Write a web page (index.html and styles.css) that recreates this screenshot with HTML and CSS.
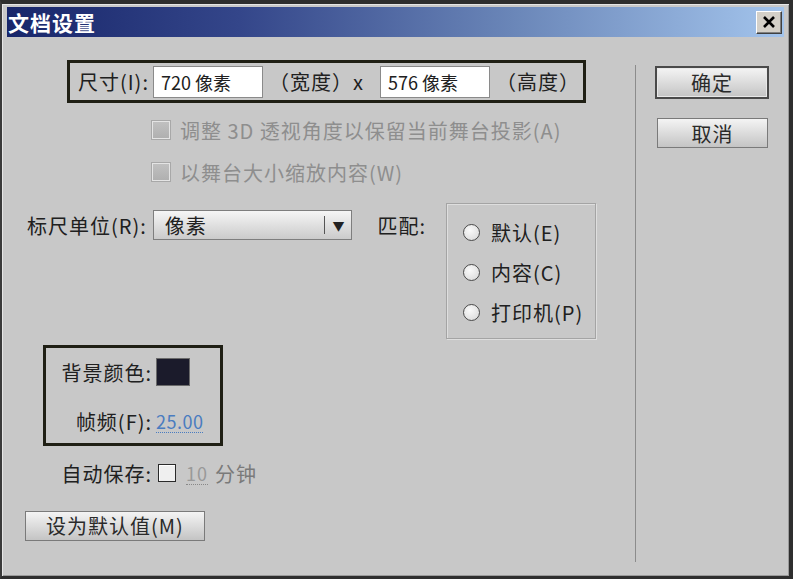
FILE: index.html
```html
<!DOCTYPE html>
<html lang="zh-CN">
<head>
    <meta charset="UTF-8">
    <title>文档设置</title>
    <link rel="stylesheet" href="styles.css">
</head>
<body>
    <div class="window">
        <div class="titlebar">
            <span class="title">文档设置</span>
            <button class="close-btn">
                <svg width="14" height="12" viewBox="0 0 14 12"><path d="M2 1 L12 11 M12 1 L2 11" stroke="#000" stroke-width="2.6" fill="none"/></svg>
            </button>
        </div>

        <div class="dialog-body">
            <div class="main">
                <!-- stage size -->
                <div class="size-box highlight">
                    <span class="label size-label">尺寸(I):</span>
                    <div class="text-field">720 像素</div>
                    <span class="unit">（宽度）x</span>
                    <div class="text-field">576 像素</div>
                    <span class="unit unit-last">（高度）</span>
                </div>

                <div class="check-row disabled first">
                    <span class="checkbox"></span>
                    <span>调整 3D 透视角度以保留当前舞台投影(A)</span>
                </div>
                <div class="check-row disabled">
                    <span class="checkbox"></span>
                    <span>以舞台大小缩放内容(W)</span>
                </div>

                <div class="ruler-row">
                    <div class="ruler">
                        <span class="label ruler-label">标尺单位(R):</span>
                        <div class="dropdown">
                            <span class="dropdown-value">像素</span>
                            <span class="dropdown-sep"></span>
                            <span class="dropdown-arrow">▼</span>
                        </div>
                        <span class="label match-label">匹配:</span>
                    </div>
                    <div class="radio-group">
                        <div class="radio-row"><span class="radio"></span>默认(E)</div>
                        <div class="radio-row"><span class="radio"></span>内容(C)</div>
                        <div class="radio-row"><span class="radio"></span>打印机(P)</div>
                    </div>
                </div>

                <div class="stage-box highlight">
                    <span class="label">背景颜色:</span>
                    <span class="swatch"></span>
                    <span class="label">帧频(F):</span>
                    <span class="link-value">25.00</span>
                </div>

                <div class="autosave-row">
                    <span class="label autosave-label">自动保存:</span>
                    <span class="checkbox enabled"></span>
                    <span class="minutes">10</span>
                    <span class="muted">分钟</span>
                </div>

                <button class="btn btn-wide">设为默认值(M)</button>
            </div>

            <div class="side">
                <button class="btn btn-default">确定</button>
                <button class="btn btn-cancel">取消</button>
            </div>
        </div>
    </div>
</body>
</html>
```

FILE: styles.css
```css
html, body {
    margin: 0;
    padding: 0;
}
body {
    width: 793px;
    height: 579px;
    overflow: hidden;
    font-family: "Noto Sans CJK SC", "Noto Sans", sans-serif;
    font-size: 20px;
    letter-spacing: 1px;
    color: #202020;
    background: #c8c8c8;
}
.window {
    box-sizing: border-box;
    width: 793px;
    height: 579px;
    display: flex;
    flex-direction: column;
    background: #c8c8c8;
    border-top: 4px solid #2e2e2e;
    border-left: 2px solid #3a3a3a;
    border-right: 4px solid #2e2e2e;
    border-bottom: 3px solid #2e2e2e;
    padding: 3px 5px 0 5px;
    box-shadow: inset 1px 1px 0 #e6e6e6, inset -1px -1px 0 #9a9a9a;
}
.titlebar {
    height: 30px;
    display: flex;
    align-items: center;
    justify-content: space-between;
    background: linear-gradient(to right, #18266a 0%, #34468a 30%, #6a86b8 65%, #a3c4ec 100%);
    padding: 0 2px 0 1px;
}
.title {
    color: #fff;
    font-weight: bold;
    font-size: 21px;
    letter-spacing: 1px;
    line-height: 30px;
}
.close-btn {
    width: 26px;
    height: 23px;
    padding: 0;
    display: flex;
    align-items: center;
    justify-content: center;
    background: #d4d0c8;
    border: 1px solid;
    border-color: #fff #404040 #404040 #fff;
    box-shadow: inset -1px -1px 0 #808080;
}

.dialog-body {
    flex: 1;
    display: flex;
}
.main {
    flex: 1;
    display: flex;
    flex-direction: column;
    align-items: flex-start;
}
.side {
    width: 129px;
    margin: 28px 0 14px;
    padding-left: 19px;
    border-left: 1px solid #8c8c8c;
    display: flex;
    flex-direction: column;
    align-items: flex-start;
}

.highlight {
    border: 3px solid #1f1f14;
}
.label {
    white-space: nowrap;
}

/* size row */
.size-box {
    margin: 23px 0 0 60px;
    width: 505px;
    height: 37px;
    display: flex;
    align-items: center;
    padding-left: 8px;
}
.size-label {
    flex: none;
    width: 75px;
}
.text-field {
    flex: none;
    box-sizing: border-box;
    width: 110px;
    height: 32px;
    padding-left: 7px;
    background: #fff;
    border: 1px solid #8a8a8a;
    font-size: 18px;
    letter-spacing: 0;
    line-height: 30px;
}
.unit {
    flex: none;
    box-sizing: border-box;
    width: 117px;
    padding-left: 6px;
    white-space: nowrap;
}
.unit-last {
    flex: 1;
    width: auto;
}

/* disabled checkboxes */
.check-row {
    display: flex;
    align-items: center;
    height: 28px;
    margin: 14px 0 0 145px;
    gap: 10px;
}
.check-row.first {
    margin-top: 13px;
}
.check-row.disabled {
    color: #8e8e8e;
}
.checkbox {
    box-sizing: border-box;
    width: 18px;
    height: 18px;
    background: linear-gradient(#c0c0c0, #b0b0b0);
    border: 1px solid #e4e4e4;
    box-shadow: 0 0 0 1px #a8a8a8;
}
.checkbox.enabled {
    background: #efefef;
    border: 1px solid #2a2a2a;
    box-shadow: inset 1px 1px 0 #fff;
}

/* ruler units */
.ruler-row {
    display: flex;
    margin: 17px 0 0 20px;
}
.ruler {
    width: 399px;
    display: flex;
    align-items: center;
    height: 30px;
    margin-top: 7px;
}
.ruler-label {
    width: 126px;
}
.dropdown {
    box-sizing: border-box;
    width: 200px;
    height: 30px;
    display: flex;
    align-items: center;
    border: 1px solid #7e7e7e;
    background: linear-gradient(#f6f6f6, #dedede 55%, #cbcbcb);
    padding-left: 11px;
}
.dropdown-value {
    flex: 1;
}
.dropdown-sep {
    width: 1px;
    height: 18px;
    background: #555;
}
.dropdown-arrow {
    width: 26px;
    text-align: center;
    font-size: 12px;
    letter-spacing: 0;
    color: #222;
}
.match-label {
    margin-left: 25px;
}
.radio-group {
    box-sizing: border-box;
    width: 150px;
    height: 136px;
    margin-left: 20px;
    padding: 8px 0 0 16px;
    border: 1px solid #a4a4a4;
    box-shadow: inset 1px 1px 0 #dedede, 1px 1px 0 #dedede;
}
.radio-row {
    display: flex;
    align-items: center;
    height: 40px;
    gap: 11px;
}
.radio {
    box-sizing: border-box;
    width: 17px;
    height: 17px;
    border-radius: 50%;
    border: 1px solid #4a4a4a;
    background: radial-gradient(circle at 40% 35%, #fafafa, #d6d6d6);
}

/* background & frame rate */
.stage-box {
    margin: 6px 0 0 36px;
    width: 174px;
    height: 85px;
    display: grid;
    grid-template-columns: 106px auto;
    grid-template-rows: 28px 28px;
    row-gap: 21px;
    column-gap: 4px;
    align-items: center;
    align-content: start;
    padding-top: 10px;
}
.stage-box .label {
    text-align: right;
}
.swatch {
    box-sizing: border-box;
    width: 34px;
    height: 28px;
    background: #1b1b2b;
    border: 1px solid #6a6a6a;
}
.link-value {
    color: #4a7cc0;
    border-bottom: 1px dotted #4a7cc0;
    line-height: 22px;
    font-size: 18px;
    letter-spacing: 0.5px;
    justify-self: start;
}

/* autosave */
.autosave-row {
    display: flex;
    align-items: center;
    height: 28px;
    margin-top: 13px;
}
.autosave-label {
    width: 145px;
    text-align: right;
    margin-right: 6px;
}
.minutes {
    margin-left: 10px;
    color: #999;
    font-size: 18px;
    line-height: 22px;
    border-bottom: 1px dotted #888;
}
.muted {
    margin-left: 7px;
    color: #7a7a7a;
}

/* buttons */
.btn {
    box-sizing: border-box;
    font-family: inherit;
    font-size: 20px;
    letter-spacing: 1px;
    color: #2a2a2a;
    padding: 0;
    background: linear-gradient(#f4f4f4, #dcdcdc 50%, #c4c4c4);
    border: 1px solid #7a7a7a;
    cursor: pointer;
}
.btn-wide {
    width: 180px;
    height: 30px;
    margin: 24px 0 0 18px;
    line-height: 28px;
}
.btn-default {
    width: 114px;
    height: 33px;
    margin-top: 1px;
    border: 2px solid #4a4a4a;
    box-shadow: inset 0 0 0 1px #e8e8e8;
}
.btn-cancel {
    width: 111px;
    height: 30px;
    margin: 19px 0 0 2px;
}
```
